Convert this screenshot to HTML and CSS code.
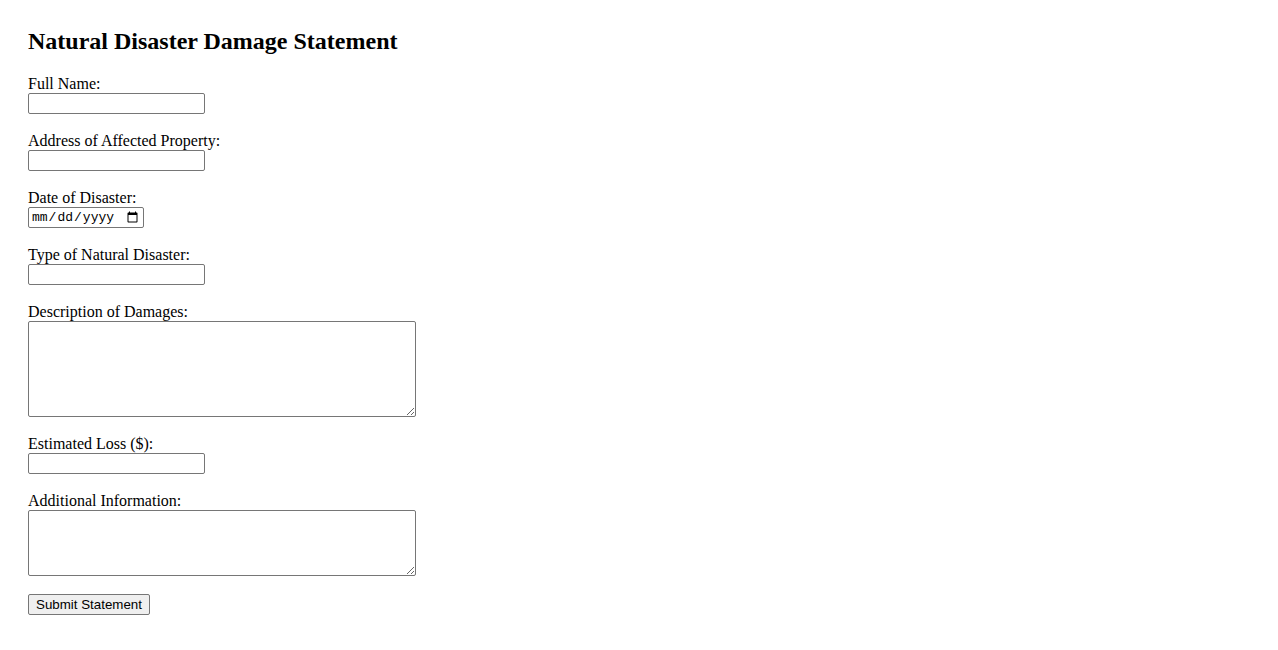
FILE: index.html
```html
<!DOCTYPE html>
<html>
<head>
<meta charset="utf-8">
<title>Natural Disaster Damage Statement</title>
<link rel="stylesheet" href="styles.css">
</head>
<body>
<div class="page">
<h2 class="title">Natural Disaster Damage Statement</h2>
<form class="form">
<label for="name">Full Name:</label><br>
<input class="field" type="text" id="name"><br><br>
<label for="addr">Address of Affected Property:</label><br>
<input class="field" type="text" id="addr"><br><br>
<label for="date">Date of Disaster:</label><br>
<input class="field date" type="date" id="date"><br><br>
<label for="type">Type of Natural Disaster:</label><br>
<input class="field" type="text" id="type"><br><br>
<label for="desc">Description of Damages:</label><br>
<textarea class="area area-lg" id="desc"></textarea><br><br>
<label for="loss">Estimated Loss ($):</label><br>
<input class="field" type="number" id="loss"><br><br>
<label for="info">Additional Information:</label><br>
<textarea class="area area-sm" id="info"></textarea><br><br>
<button class="submit" type="submit">Submit Statement</button>
</form>
</div>
</body>
</html>
```
FILE: styles.css
```css
body {
  margin: 0;
  font-family: "Liberation Serif", "Times New Roman", serif;
  font-size: 16px;
  color: #000;
  background: #fff;
}
.page {
  padding: 28px 28px;
}
.title {
  margin: 0 0 19.92px 0;
  font-size: 24px;
  font-weight: bold;
}
.form {
  margin: 0;
}
.field {
  box-sizing: border-box;
  width: 177px;
  height: 21px;
  margin: 0;
  padding: 1px 2px;
  border: 1px solid #767676;
  border-radius: 2px;
  font-family: "Liberation Sans", Arial, sans-serif;
  font-size: 13.33px;
  vertical-align: top;
}
.field.date {
  width: 116px;
  font-family: "Liberation Mono", monospace;
  font-size: 13px;
  padding: 1px 2px;
}
.area {
  box-sizing: border-box;
  width: 388px;
  margin: 0;
  padding: 2px;
  border: 1px solid #767676;
  border-radius: 2px;
  font-family: "Liberation Mono", monospace;
  font-size: 13.33px;
  vertical-align: top;
}
.area-lg {
  height: 96px;
}
.area-sm {
  height: 66px;
}
.submit {
  box-sizing: border-box;
  height: 21px;
  padding: 1px 7px;
  margin: 0;
  background: #efefef;
  border: 1px solid #767676;
  border-radius: 2px;
  font-family: "Liberation Sans", Arial, sans-serif;
  font-size: 13.33px;
  color: #000;
}
```
